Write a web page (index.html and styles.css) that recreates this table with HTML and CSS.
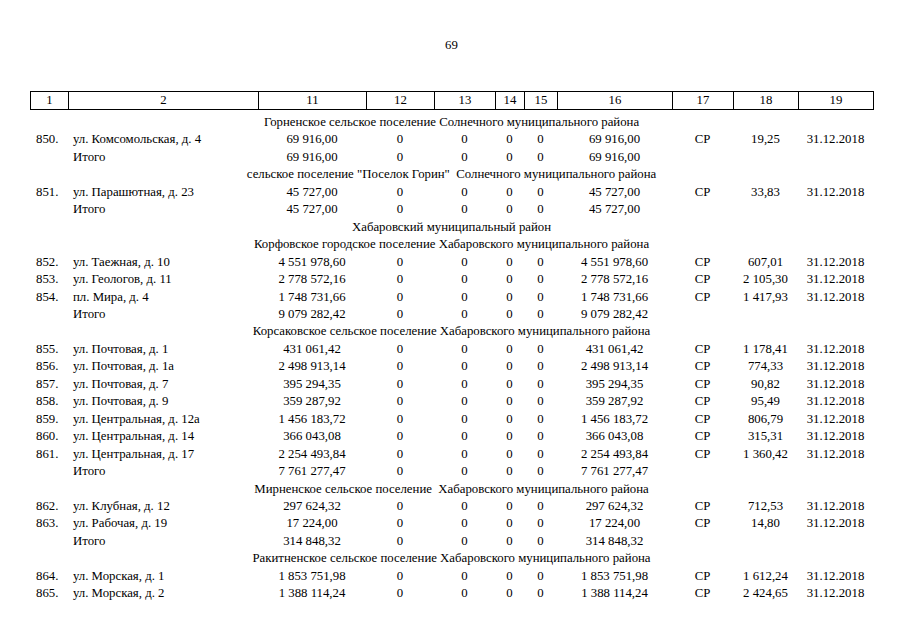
FILE: index.html
```html
<!DOCTYPE html>
<html lang="ru">
<head>
<meta charset="utf-8">
<link rel="stylesheet" href="styles.css">
</head>
<body>
<div class="page">
  <div class="pagenum">69</div>
  <table class="grid head">
    <colgroup>
      <col class="c1"><col class="c2"><col class="c11"><col class="c12"><col class="c13"><col class="c14"><col class="c15"><col class="c16"><col class="c17"><col class="c18"><col class="c19">
    </colgroup>
    <tr><td>1</td><td>2</td><td>11</td><td>12</td><td>13</td><td>14</td><td>15</td><td>16</td><td>17</td><td>18</td><td>19</td></tr>
  </table>
  <table class="grid body">
    <colgroup>
      <col class="c1"><col class="c2"><col class="c11"><col class="c12"><col class="c13"><col class="c14"><col class="c15"><col class="c16"><col class="c17"><col class="c18"><col class="c19">
    </colgroup>
    <tr class="sec"><td colspan="11">Горненское сельское поселение Солнечного муниципального района</td></tr>
    <tr><td class="n">850.</td><td class="a">ул. Комсомольская, д. 4</td><td>69 916,00</td><td>0</td><td>0</td><td>0</td><td>0</td><td>69 916,00</td><td>СР</td><td>19,25</td><td>31.12.2018</td></tr>
    <tr><td class="n"></td><td class="a">Итого</td><td>69 916,00</td><td>0</td><td>0</td><td>0</td><td>0</td><td>69 916,00</td><td></td><td></td><td></td></tr>
    <tr class="sec"><td colspan="11">сельское поселение "Поселок Горин"  Солнечного муниципального района</td></tr>
    <tr><td class="n">851.</td><td class="a">ул. Парашютная, д. 23</td><td>45 727,00</td><td>0</td><td>0</td><td>0</td><td>0</td><td>45 727,00</td><td>СР</td><td>33,83</td><td>31.12.2018</td></tr>
    <tr><td class="n"></td><td class="a">Итого</td><td>45 727,00</td><td>0</td><td>0</td><td>0</td><td>0</td><td>45 727,00</td><td></td><td></td><td></td></tr>
    <tr class="sec"><td colspan="11">Хабаровский муниципальный район</td></tr>
    <tr class="sec"><td colspan="11">Корфовское городское поселение Хабаровского муниципального района</td></tr>
    <tr><td class="n">852.</td><td class="a">ул. Таежная, д. 10</td><td>4 551 978,60</td><td>0</td><td>0</td><td>0</td><td>0</td><td>4 551 978,60</td><td>СР</td><td>607,01</td><td>31.12.2018</td></tr>
    <tr><td class="n">853.</td><td class="a">ул. Геологов, д. 11</td><td>2 778 572,16</td><td>0</td><td>0</td><td>0</td><td>0</td><td>2 778 572,16</td><td>СР</td><td>2 105,30</td><td>31.12.2018</td></tr>
    <tr><td class="n">854.</td><td class="a">пл. Мира, д. 4</td><td>1 748 731,66</td><td>0</td><td>0</td><td>0</td><td>0</td><td>1 748 731,66</td><td>СР</td><td>1 417,93</td><td>31.12.2018</td></tr>
    <tr><td class="n"></td><td class="a">Итого</td><td>9 079 282,42</td><td>0</td><td>0</td><td>0</td><td>0</td><td>9 079 282,42</td><td></td><td></td><td></td></tr>
    <tr class="sec"><td colspan="11">Корсаковское сельское поселение Хабаровского муниципального района</td></tr>
    <tr><td class="n">855.</td><td class="a">ул. Почтовая, д. 1</td><td>431 061,42</td><td>0</td><td>0</td><td>0</td><td>0</td><td>431 061,42</td><td>СР</td><td>1 178,41</td><td>31.12.2018</td></tr>
    <tr><td class="n">856.</td><td class="a">ул. Почтовая, д. 1а</td><td>2 498 913,14</td><td>0</td><td>0</td><td>0</td><td>0</td><td>2 498 913,14</td><td>СР</td><td>774,33</td><td>31.12.2018</td></tr>
    <tr><td class="n">857.</td><td class="a">ул. Почтовая, д. 7</td><td>395 294,35</td><td>0</td><td>0</td><td>0</td><td>0</td><td>395 294,35</td><td>СР</td><td>90,82</td><td>31.12.2018</td></tr>
    <tr><td class="n">858.</td><td class="a">ул. Почтовая, д. 9</td><td>359 287,92</td><td>0</td><td>0</td><td>0</td><td>0</td><td>359 287,92</td><td>СР</td><td>95,49</td><td>31.12.2018</td></tr>
    <tr><td class="n">859.</td><td class="a">ул. Центральная, д. 12а</td><td>1 456 183,72</td><td>0</td><td>0</td><td>0</td><td>0</td><td>1 456 183,72</td><td>СР</td><td>806,79</td><td>31.12.2018</td></tr>
    <tr><td class="n">860.</td><td class="a">ул. Центральная, д. 14</td><td>366 043,08</td><td>0</td><td>0</td><td>0</td><td>0</td><td>366 043,08</td><td>СР</td><td>315,31</td><td>31.12.2018</td></tr>
    <tr><td class="n">861.</td><td class="a">ул. Центральная, д. 17</td><td>2 254 493,84</td><td>0</td><td>0</td><td>0</td><td>0</td><td>2 254 493,84</td><td>СР</td><td>1 360,42</td><td>31.12.2018</td></tr>
    <tr><td class="n"></td><td class="a">Итого</td><td>7 761 277,47</td><td>0</td><td>0</td><td>0</td><td>0</td><td>7 761 277,47</td><td></td><td></td><td></td></tr>
    <tr class="sec"><td colspan="11">Мирненское сельское поселение  Хабаровского муниципального района</td></tr>
    <tr><td class="n">862.</td><td class="a">ул. Клубная, д. 12</td><td>297 624,32</td><td>0</td><td>0</td><td>0</td><td>0</td><td>297 624,32</td><td>СР</td><td>712,53</td><td>31.12.2018</td></tr>
    <tr><td class="n">863.</td><td class="a">ул. Рабочая, д. 19</td><td>17 224,00</td><td>0</td><td>0</td><td>0</td><td>0</td><td>17 224,00</td><td>СР</td><td>14,80</td><td>31.12.2018</td></tr>
    <tr><td class="n"></td><td class="a">Итого</td><td>314 848,32</td><td>0</td><td>0</td><td>0</td><td>0</td><td>314 848,32</td><td></td><td></td><td></td></tr>
    <tr class="sec"><td colspan="11">Ракитненское сельское поселение Хабаровского муниципального района</td></tr>
    <tr><td class="n">864.</td><td class="a">ул. Морская, д. 1</td><td>1 853 751,98</td><td>0</td><td>0</td><td>0</td><td>0</td><td>1 853 751,98</td><td>СР</td><td>1 612,24</td><td>31.12.2018</td></tr>
    <tr><td class="n">865.</td><td class="a">ул. Морская, д. 2</td><td>1 388 114,24</td><td>0</td><td>0</td><td>0</td><td>0</td><td>1 388 114,24</td><td>СР</td><td>2 424,65</td><td>31.12.2018</td></tr>
  </table>
</div>
</body>
</html>
```
FILE: styles.css
```css
html, body {
  margin: 0;
  padding: 0;
  background: #fff;
}
body {
  font-family: "Liberation Serif", "Times New Roman", serif;
  font-size: 12.8px;
  color: #000;
}
.page {
  padding: 38px 0 0 30px;
  width: 843px;
}
.pagenum {
  text-align: center;
  line-height: 14px;
  height: 14px;
  margin-bottom: 39px;
}
.grid {
  width: 843px;
  table-layout: fixed;
  border-collapse: collapse;
}
.grid td {
  padding: 0;
  text-align: center;
  white-space: pre;
  overflow: hidden;
}
.head td {
  border: 1px solid #000;
  height: 17px;
  line-height: 17px;
}
.body {
  margin-top: 4px;
}
.body tr {
  height: 17.45px;
}
.body td {
  line-height: 17.45px;
  height: 17.45px;
}
.body td.n {
  text-align: left;
  padding-left: 6px;
}
.body td.a {
  text-align: left;
  padding-left: 5px;
}
.c1 { width: 38px; }
.c2 { width: 190px; }
.c11 { width: 108px; }
.c12 { width: 68px; }
.c13 { width: 61px; }
.c14 { width: 29px; }
.c15 { width: 33px; }
.c16 { width: 115px; }
.c17 { width: 61px; }
.c18 { width: 65px; }
.c19 { width: 75px; }
```
